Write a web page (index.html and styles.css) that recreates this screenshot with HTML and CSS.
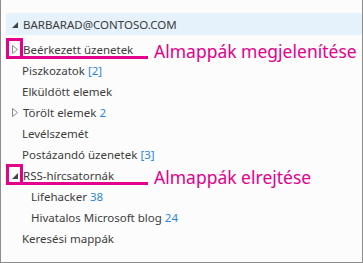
FILE: index.html
```html
<!DOCTYPE html>
<html lang="hu">
<head>
<meta charset="utf-8">
<link rel="stylesheet" href="styles.css">
</head>
<body>
<div class="pane">
  <div class="account">
    <svg class="tri-down" width="6" height="6" viewBox="0 0 6 6"><polygon points="6,0 6,6 0,6" fill="#444"/></svg>
    <span>BARBARAD@CONTOSO.COM</span>
  </div>
  <ul class="folders">
    <li class="row has-tri callout-row">
      <svg class="tri-right" width="6" height="9" viewBox="0 0 6 9"><polygon points="0.5,0.5 5.5,4.5 0.5,8.5" fill="none" stroke="#8a8a8a" stroke-width="1"/></svg>
      <span>Beérkezett üzenetek</span>
      <div class="callout">
        <div class="c-box"></div>
        <div class="c-line"></div>
        <div class="c-label">Almappák megjelenítése</div>
      </div>
    </li>
    <li class="row">Piszkozatok <span class="count">[2]</span></li>
    <li class="row">Elküldött elemek</li>
    <li class="row has-tri">
      <svg class="tri-right" width="6" height="9" viewBox="0 0 6 9"><polygon points="0.5,0.5 5.5,4.5 0.5,8.5" fill="none" stroke="#8a8a8a" stroke-width="1"/></svg>
      <span>Törölt elemek <span class="count">2</span></span>
    </li>
    <li class="row">Levélszemét</li>
    <li class="row">Postázandó üzenetek <span class="count">[3]</span></li>
    <li class="row has-tri callout-row">
      <svg class="tri-down" width="6" height="6" viewBox="0 0 6 6"><polygon points="6,0 6,6 0,6" fill="#444"/></svg>
      <span>RSS-hírcsatornák</span>
      <div class="callout">
        <div class="c-box"></div>
        <div class="c-line"></div>
        <div class="c-label">Almappák elrejtése</div>
      </div>
    </li>
    <li class="row sub">Lifehacker <span class="count">38</span></li>
    <li class="row sub">Hivatalos Microsoft blog <span class="count">24</span></li>
    <li class="row">Keresési mappák</li>
  </ul>
</div>
</body>
</html>
```
FILE: styles.css
```css
html, body {
  margin: 0;
  padding: 0;
}
body {
  width: 363px;
  height: 263px;
  overflow: hidden;
  font-family: "Noto Sans", "Open Sans", sans-serif;
}
.pane {
  box-sizing: border-box;
  width: 363px;
  height: 263px;
  background: #fcfcfc;
  border: 1px solid #8c8c8c;
  border-top: none;
  padding-top: 13px;
}
.account {
  margin-left: 5px;
  height: 22px;
  background: #e5f1fb;
  display: flex;
  align-items: center;
  padding-left: 6px;
  gap: 5px;
  font-size: 11.5px;
  color: #3c3c3c;
}
.account .tri-down {
  margin-top: 1px;
}
.folders {
  list-style: none;
  margin: 4px 0 0 0;
  padding: 0;
}
.row {
  height: 21px;
  line-height: 21px;
  font-size: 11.5px;
  color: #3c3c3c;
  padding-left: 21px;
  white-space: nowrap;
  position: relative;
}
.row.has-tri {
  display: flex;
  align-items: center;
  padding-left: 11px;
  gap: 5px;
}
.row.sub {
  padding-left: 30px;
}
.count {
  color: #2b88d8;
}
.callout {
  position: absolute;
  left: 5px;
  top: -1px;
  width: 356px;
  height: 22px;
  pointer-events: none;
}
.c-box {
  position: absolute;
  left: 0;
  top: 0;
  width: 17px;
  height: 21px;
  box-sizing: border-box;
  border: 3px solid #e3008c;
}
.c-line {
  position: absolute;
  left: 17px;
  top: 18px;
  width: 125px;
  height: 3px;
  background: #e3008c;
}
.c-label {
  position: absolute;
  left: 148px;
  top: 3px;
  font-size: 17.5px;
  line-height: 20px;
  color: #e3008c;
  white-space: nowrap;
}
```
